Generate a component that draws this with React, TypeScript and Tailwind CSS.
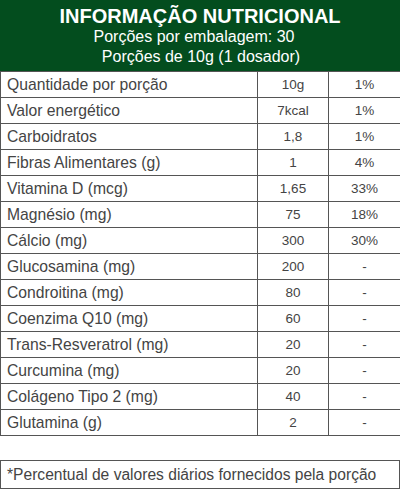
const rows: [string, string, string][] = [
  ["Quantidade por porção", "10g", "1%"],
  ["Valor energético", "7kcal", "1%"],
  ["Carboidratos", "1,8", "1%"],
  ["Fibras Alimentares (g)", "1", "4%"],
  ["Vitamina D (mcg)", "1,65", "33%"],
  ["Magnésio (mg)", "75", "18%"],
  ["Cálcio (mg)", "300", "30%"],
  ["Glucosamina (mg)", "200", "-"],
  ["Condroitina (mg)", "80", "-"],
  ["Coenzima Q10 (mg)", "60", "-"],
  ["Trans-Resveratrol (mg)", "20", "-"],
  ["Curcumina (mg)", "20", "-"],
  ["Colágeno Tipo 2 (mg)", "40", "-"],
  ["Glutamina (g)", "2", "-"],
];

export default function App() {
  return (
    <div className="w-[400px] h-[490px] bg-white font-['Liberation_Sans',Arial,sans-serif] text-[#444]">
      <div className="h-[71px] bg-[#034d1e] text-white flex flex-col items-center pt-[5px]">
        <h1 className="text-[20px] font-bold leading-[22px]">INFORMAÇÃO NUTRICIONAL</h1>
        <p className="text-[16px] leading-[20px] pr-[12px]">Porções por embalagem: 30</p>
        <p className="text-[16px] leading-[20px] pl-[2px]">Porções de 10g (1 dosador)</p>
      </div>
      <table className="w-[400px] border-collapse table-fixed">
        <colgroup>
          <col className="w-[257px]" />
          <col className="w-[71px]" />
          <col className="w-[72px]" />
        </colgroup>
        <tbody>
          {rows.map(([name, qty, pct]) => (
            <tr key={name} className="h-[26px]">
              <td className="border border-[#555] pl-[6px] text-[15.7px] leading-none">{name}</td>
              <td className="border border-[#555] text-center text-[13.5px] leading-none">{qty}</td>
              <td className="border border-[#555] text-center text-[13.5px] leading-none">{pct}</td>
            </tr>
          ))}
        </tbody>
      </table>
      <div className="mt-[24px] h-[29px] border border-[#555] flex items-center pl-[6px] text-[15.6px]">
        *Percentual de valores diários fornecidos pela porção
      </div>
    </div>
  );
}
